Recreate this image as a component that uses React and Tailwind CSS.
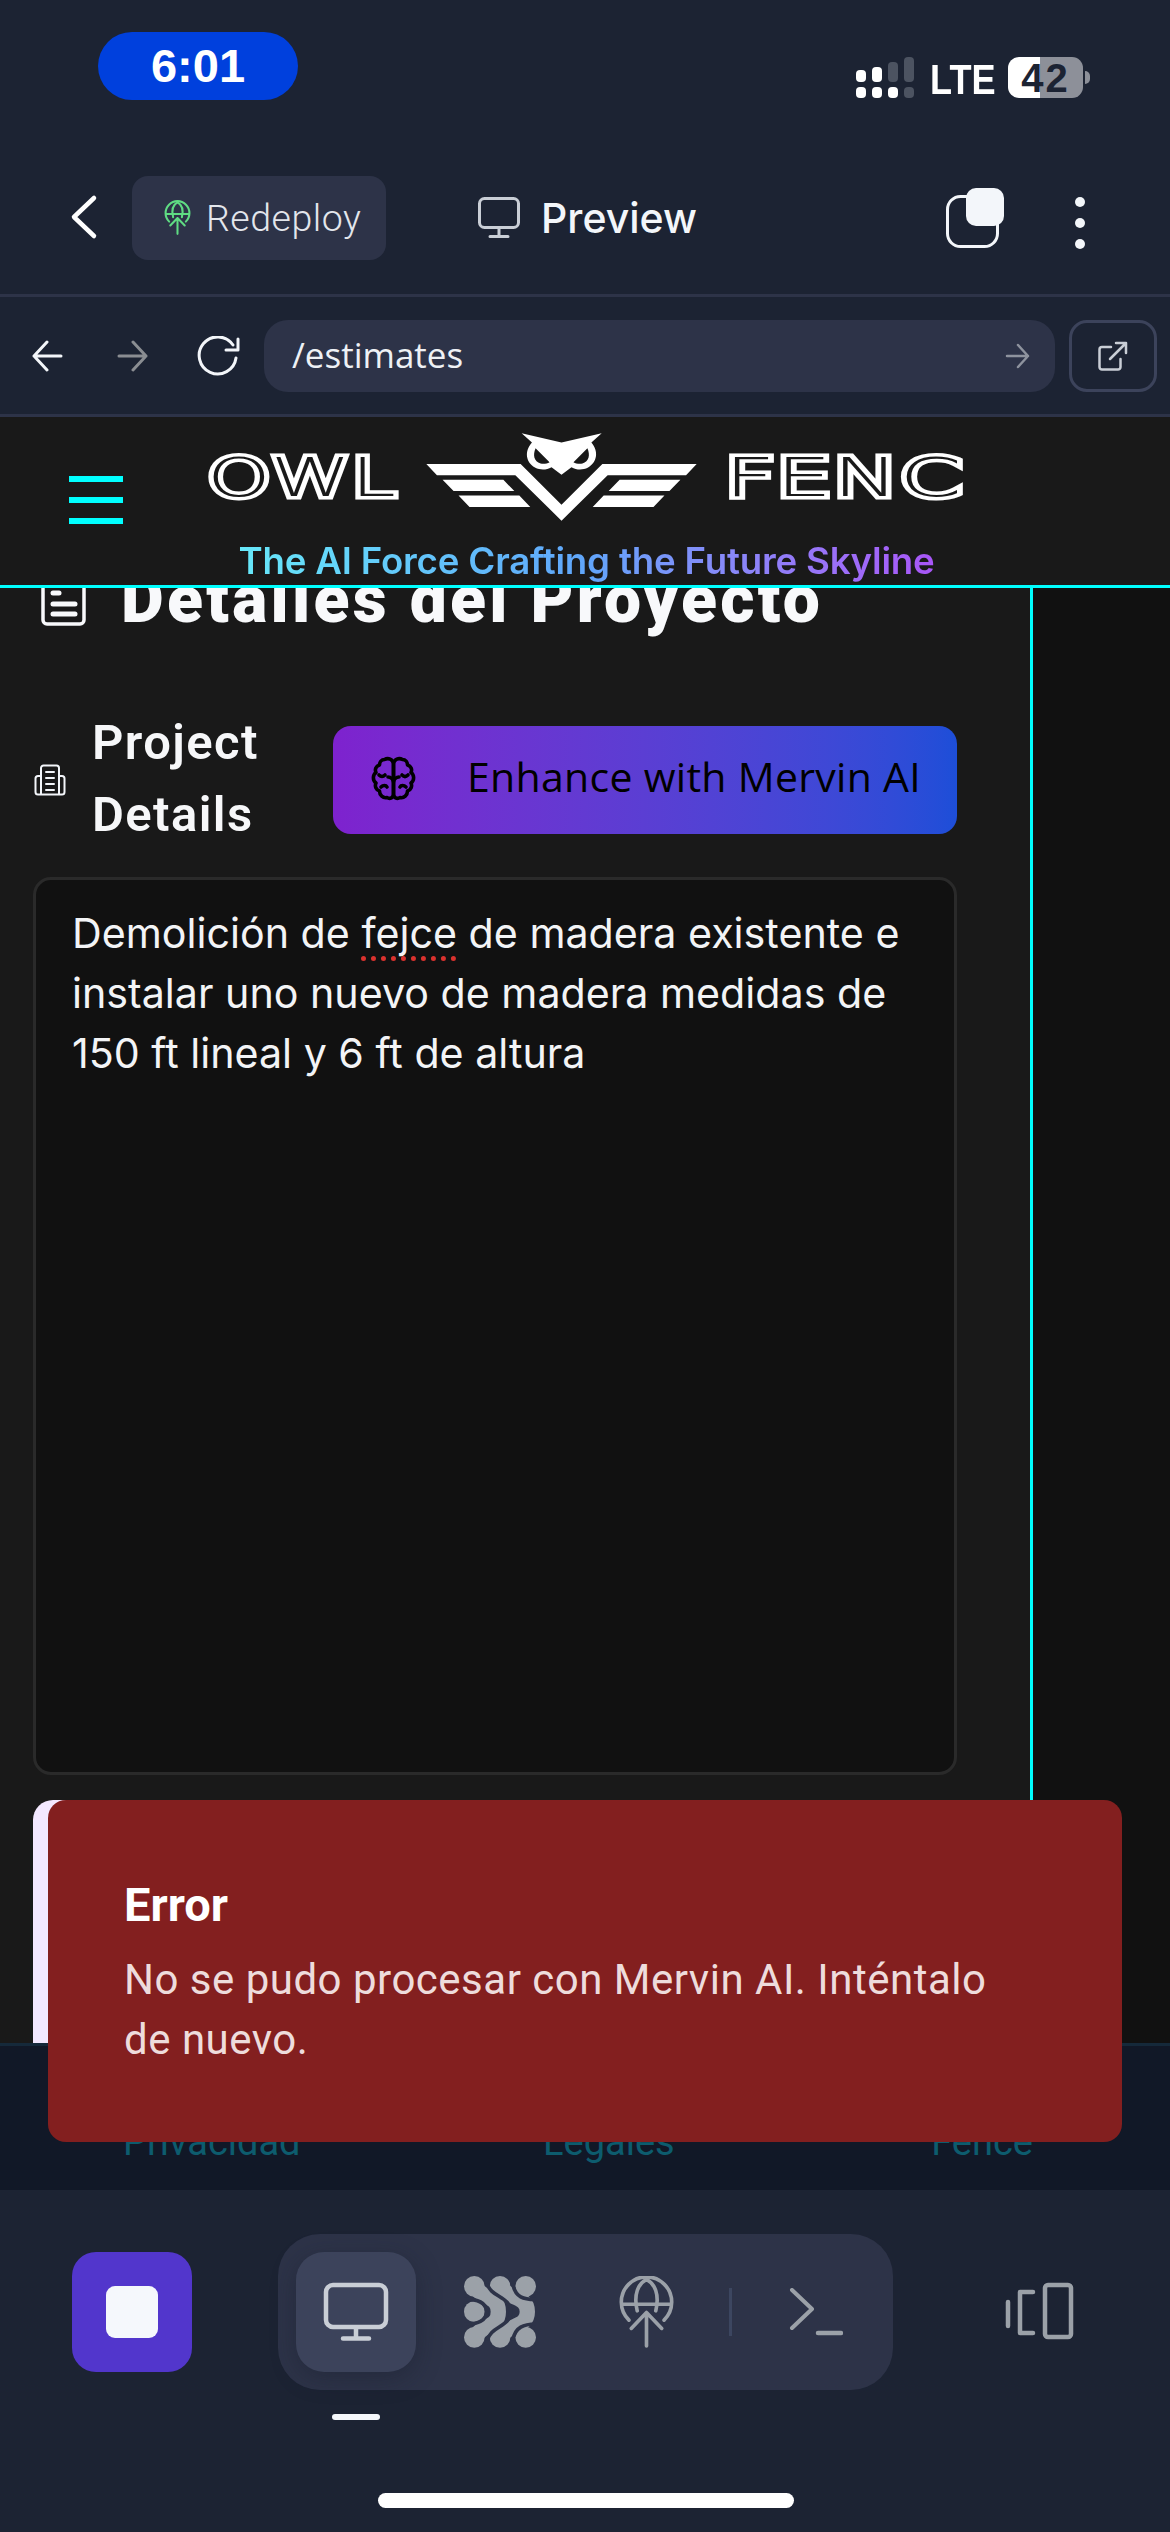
import React from "react";

const Globe = ({ className, stroke, sw = 10 }) => (
  <svg className={className} viewBox="74 105 172 220" fill="none" stroke={stroke} strokeWidth={sw} strokeLinecap="round" strokeLinejoin="round">
    <path d="M107 238 A76 76 0 1 1 213 238" />
    <path d="M132 210 C120 160 135 128 160 115 C185 128 200 160 188 210" />
    <path d="M86 190 H234" />
    <path d="M160 316 V215 M114 263 L160 215 L206 263" />
  </svg>
);

const Logo = ({ children, w, scale }) => (
  <div className={`${w} h-[49px] mt-[36px] shrink-0`}>
    <div className={`${scale} origin-left font-['DejaVu_Sans'] font-extralight text-[54px] leading-[49px] text-[#191919] [-webkit-text-stroke:7px_#ffffff] [paint-order:stroke_fill] whitespace-nowrap`}>
      {children}
    </div>
  </div>
);

export default function App() {
  return (
    <div className="w-[1170px] h-[2532px] overflow-hidden relative flex flex-col bg-[#1c2333] font-['Inter',sans-serif] text-white">
      {/* Status bar */}
      <div className="h-[176px] flex items-start shrink-0">
        <div className="ml-[98px] mt-[32px] w-[200px] h-[68px] rounded-full bg-[#0040dd] flex items-center justify-center font-['Liberation_Sans'] font-bold text-[47px]">6:01</div>
        <svg className="ml-[558px] mt-[57px] w-[58px] h-[41px]" viewBox="0 0 58 41">
          <rect x="0" y="13" width="10" height="12" rx="4" fill="#fff" />
          <rect x="16" y="10" width="10" height="15" rx="4" fill="#fff" />
          <rect x="32" y="5" width="10" height="20" rx="4" fill="#4c5361" />
          <rect x="48" y="0" width="10" height="25" rx="4" fill="#4c5361" />
          <rect x="0" y="30" width="10" height="11" rx="4" fill="#fff" />
          <rect x="16" y="30" width="10" height="11" rx="4" fill="#fff" />
          <rect x="32" y="30" width="10" height="11" rx="4" fill="#fff" />
          <rect x="48" y="30" width="10" height="11" rx="4" fill="#4c5361" />
        </svg>
        <div className="ml-[16px] mt-[59px] w-[63px] h-[41px] flex items-center font-['Liberation_Sans'] font-bold text-[43px] leading-[41px] origin-left scale-x-[0.84] whitespace-nowrap">LTE</div>
        <div className="ml-[15px] mt-[57px] w-[75px] h-[41px] relative rounded-[11px] overflow-hidden bg-[linear-gradient(90deg,#ffffff_0,#ffffff_32px,#8d9099_32px,#8d9099_100%)] flex items-center justify-center font-['Liberation_Sans'] font-bold text-[40px] tracking-[2px] text-[#1c2333]">42</div>
        <div className="mt-[71px] w-[5px] h-[13px] rounded-r-full bg-[#8d9099] ml-[2px]"></div>
      </div>

      {/* Nav row */}
      <div className="h-[118px] flex items-start shrink-0">
        <svg className="ml-[70px] mt-[18px] w-[28px] h-[46px]" viewBox="0 0 28 46" fill="none" stroke="#fff" strokeWidth="4.5" strokeLinecap="round" strokeLinejoin="round">
          <path d="M24 4 L4 23 L24 42" />
        </svg>
        <div className="ml-[34px] w-[254px] h-[84px] rounded-[16px] bg-[#2d3348] flex items-center">
          <Globe className="ml-[32px] w-[27px] h-[36px]" stroke="#5fdc83" sw={13} />
          <span className="ml-[15px] text-[37.5px] text-[#e3e6ec] font-['Roboto'] font-light tracking-[0.5px]">Redeploy</span>
        </div>
        <svg className="ml-[92px] mt-[21px] w-[42px] h-[41px]" viewBox="0 0 42 41" fill="none" stroke="#c9ced6" strokeWidth="3" strokeLinecap="round" strokeLinejoin="round">
          <rect x="1.5" y="1.5" width="39" height="29" rx="5" />
          <path d="M21 31 V39 M12 39.5 H30" />
        </svg>
        <span className="ml-[21px] mt-[14px] w-[152px] shrink-0 whitespace-nowrap text-[41px] leading-[56px] font-medium text-[#f3f6fa]">Preview</span>
        <svg className="ml-[252px] mt-[12px] w-[60px] h-[60px]" viewBox="0 0 60 60">
          <rect x="2.5" y="8.5" width="50" height="50" rx="13" fill="none" stroke="#f3f6fa" strokeWidth="3" />
          <rect x="21" y="0" width="38" height="38" rx="10" fill="#f3f6fa" />
        </svg>
        <div className="ml-[70px] mt-[21px] w-[10px] flex flex-col gap-[11px]">
          <div className="w-[10px] h-[10px] rounded-full bg-[#f3f6fa]"></div>
          <div className="w-[10px] h-[10px] rounded-full bg-[#f3f6fa]"></div>
          <div className="w-[10px] h-[10px] rounded-full bg-[#f3f6fa]"></div>
        </div>
      </div>
      <div className="h-[3px] bg-[#2d3348] shrink-0"></div>

      {/* Browser row */}
      <div className="h-[117px] flex items-center shrink-0">
        <svg className="ml-[32px] w-[31px] h-[32px]" viewBox="0 0 31 32" fill="none" stroke="#f3f6fa" strokeWidth="3" strokeLinecap="round" strokeLinejoin="round">
          <path d="M15 2 L2 16 L15 30 M2 16 H29" />
        </svg>
        <svg className="ml-[54px] w-[31px] h-[32px]" viewBox="0 0 31 32" fill="none" stroke="#8a8d92" strokeWidth="3" strokeLinecap="round" strokeLinejoin="round">
          <path d="M16 2 L29 16 L16 30 M29 16 H2" />
        </svg>
        <svg className="ml-[49px] w-[43px] h-[40px]" viewBox="0 0 43 40" fill="none" stroke="#f3f6fa" strokeWidth="3" strokeLinecap="round" strokeLinejoin="round">
          <path d="M36 9 A18.5 18.5 0 1 0 39 22" />
          <path d="M41 3 V14 H29" />
        </svg>
        <div className="ml-[24px] w-[791px] h-[72px] rounded-[24px] bg-[#2d3348] flex items-center justify-between pl-[28px] pr-[25px]">
          <span className="text-[35px] text-[#eef1f5] font-['Open_Sans']">/estimates</span>
          <svg className="w-[25px] h-[26px]" viewBox="0 0 25 26" fill="none" stroke="#8e939e" strokeWidth="2.5" strokeLinecap="round" strokeLinejoin="round">
            <path d="M13 2 L23 13 L13 24 M23 13 H2" />
          </svg>
        </div>
        <div className="ml-[14px] w-[88px] h-[72px] rounded-[18px] border-[3px] border-[#3c435b] flex items-center justify-center">
          <svg className="w-[30px] h-[30px]" viewBox="0 0 30 30" fill="none" stroke="#c9ced6" strokeWidth="2.5" strokeLinecap="round" strokeLinejoin="round">
            <path d="M13 6 H4 A2.5 2.5 0 0 0 1.5 8.5 V26 A2.5 2.5 0 0 0 4 28.5 H20 A2.5 2.5 0 0 0 22.5 26 V18" />
            <path d="M12 18 L28 2 M18 2 H28 V12" />
          </svg>
        </div>
      </div>
      <div className="h-[3px] bg-[#2d3348] shrink-0"></div>

      {/* App header */}
      <div className="h-[168px] bg-[#191919] flex items-start shrink-0">
        <div className="ml-[69px] mt-[59px] w-[54px] flex flex-col gap-[15px]">
          <div className="h-[6px] bg-[#00ffff]"></div>
          <div className="h-[6px] bg-[#00ffff]"></div>
          <div className="h-[6px] bg-[#00ffff]"></div>
        </div>
        <div className="ml-[84px] w-[759px] flex flex-col items-center">
          <div className="w-full flex items-start h-[106px]">
            <Logo w="w-[193px]" scale="scale-x-[1.5]">OWL</Logo>
            <svg className="ml-[23px] mt-[13px] w-[277px] h-[93px] shrink-0" viewBox="700 30 830 280" fill="#ffffff">
              <path d="M995 40 L1115 68 L1236 40 L1205 68 C1228 95 1222 128 1195 143 C1177 152 1160 150 1145 142 L1115 165 L1085 142 C1070 150 1053 152 1035 143 C1008 128 1002 95 1026 68 Z M1037 85 C1028 105 1032 125 1052 131 C1062 133 1072 131 1079 127 Z M1193 85 L1151 127 C1158 131 1168 133 1178 131 C1198 125 1202 105 1193 85 Z" fillRule="evenodd" />
              <path d="M708 132 L992 132 L1115 255 L1238 132 L1522 132 L1490 166 L1254 166 L1115 303 L976 166 L740 166 Z" />
              <path d="M757 180 L940 180 L973 214 L790 214 Z M805 227 L988 227 L1021 262 L838 262 Z M1473 180 L1290 180 L1257 214 L1440 214 Z M1425 227 L1242 227 L1209 262 L1392 262 Z" />
            </svg>
            <div className="ml-[24px]">
              <Logo w="w-[242px]" scale="scale-x-[1.66]">FENC</Logo>
            </div>
          </div>
          <div className="mt-[16px] h-[44px] leading-[44px] text-[36.7px] font-semibold tracking-[-0.2px] whitespace-nowrap bg-gradient-to-r from-[#67e8f9] via-[#60a5fa] to-[#a855f7] bg-clip-text text-transparent">
            The AI Force Crafting the Future Skyline
          </div>
        </div>
      </div>
      <div className="h-[3px] bg-[#00ffff] shrink-0"></div>

      {/* Main */}
      <div className="flex-1 min-h-0 flex overflow-hidden bg-[#111111]">
        <div className="w-[1033px] shrink-0 bg-[#191919] border-r-[3px] border-[#00ffff] pl-[33px] pr-[73px] flex flex-col">
          <div className="h-[48px] flex items-end pb-[9px] shrink-0">
            <svg className="ml-[8px] w-[45px] h-[60px] shrink-0" viewBox="0 0 45 60" fill="none" stroke="#f8f9fb" strokeWidth="3.5" strokeLinecap="round" strokeLinejoin="round">
              <path d="M12 8 H6 A4 4 0 0 0 2 12 V53 A4 4 0 0 0 6 57 H39 A4 4 0 0 0 43 53 V12 A4 4 0 0 0 39 8 H33" />
              <path d="M12 26 H18" strokeWidth="5" />
              <path d="M12 37 H34 M12 47 H34" strokeWidth="5" />
            </svg>
            <div className="ml-[35px] text-[66px] leading-[64px] font-black whitespace-nowrap font-['Roboto'] text-[#f8f9fb] tracking-[3.3px] translate-y-[5px]">Detalles del Proyecto</div>
          </div>
          <div className="mt-[72px] h-[144px] flex items-center shrink-0">
            <svg className="ml-[1px] w-[32px] h-[32px] shrink-0" viewBox="0 0 32 32" fill="none" stroke="#f3f6fa" strokeWidth="2" strokeLinecap="round" strokeLinejoin="round">
              <path d="M7 30 V4 A2.5 2.5 0 0 1 9.5 1.5 H22.5 A2.5 2.5 0 0 1 25 4 V30" />
              <path d="M7 12 H4 A2.5 2.5 0 0 0 1.5 14.5 V28 A2.5 2.5 0 0 0 4 30.5 H28 A2.5 2.5 0 0 0 30.5 28 V14.5 A2.5 2.5 0 0 0 28 12 H25" />
              <path d="M12 8 H20 M12 14 H20 M12 20 H20 M12 26 H20" />
            </svg>
            <div className="ml-[26px] w-[180px] shrink-0 text-[49px] leading-[72px] font-semibold tracking-[1.4px] text-[#f6f7f9] font-['Roboto'] -translate-y-[1px]">Project Details</div>
            <div className="ml-[61px] w-[624px] shrink-0 h-[108px] rounded-[18px] bg-gradient-to-r from-[#7e22ce] to-[#1d4ed8] flex items-center text-black">
              <svg className="ml-[38px] w-[45px] h-[45px] shrink-0 -translate-y-[2px]" viewBox="0 0 45 45" fill="none" stroke="#000" strokeWidth="3.6" strokeLinecap="round" strokeLinejoin="round">
                <path d="M22.5 8 C22 3 17 1.5 13.5 3.5 C10.5 3.5 8.5 6 8.5 9 C5 10 3.5 13.5 5 16.5 C1.5 19 1.5 24.5 5 27 C3.5 30 5 34 8.5 35 C8.5 39 12 42.5 16 41.5 C19 43.5 22.5 41.5 22.5 38 Z" />
                <path d="M22.5 8 C23 3 28 1.5 31.5 3.5 C34.5 3.5 36.5 6 36.5 9 C40 10 41.5 13.5 40 16.5 C43.5 19 43.5 24.5 40 27 C41.5 30 40 34 36.5 35 C36.5 39 33 42.5 29 41.5 C26 43.5 22.5 41.5 22.5 38 Z" />
                <path d="M17 21 C19.5 21 22.5 23 22.5 26 C22.5 23 25.5 21 28 21 M8 19 C10 21 12 21 14 19 M37 19 C35 21 33 21 31 19 M10 31 C12 29 15 29 16 31 M35 31 C33 29 30 29 29 31" />
              </svg>
              <span className="ml-[51px] text-[41px] tracking-[0.3px] whitespace-nowrap font-['Open_Sans'] -translate-y-[3px]">Enhance with Mervin AI</span>
            </div>
          </div>
          <div className="mt-[25px] h-[898px] shrink-0 rounded-[18px] border-[3px] border-[#2a2a2a] bg-[#111111] pl-[36px] pr-[30px] pt-[23px] text-[41.2px] leading-[60px] text-[#f3f4f6]">
            Demolición de <span className="underline decoration-dotted decoration-[#d9322e] decoration-[5px] underline-offset-[8px] [text-decoration-skip-ink:none]">fejce</span> de madera existente e instalar uno nuevo de madera medidas de 150 ft lineal y 6 ft de altura
          </div>
          <div className="mt-[25px] flex-1 min-h-0 rounded-tl-[20px] bg-[#f3e8ff]"></div>
        </div>
      </div>

      {/* Footer */}
      <div className="h-[147px] shrink-0 bg-[#111827] border-t-[3px] border-[#15293a] flex items-start justify-between pl-[123px] pr-[137px] pt-[70px] text-[38px] leading-[52px] text-[#0d5c6e] font-['Roboto']">
        <span>Privacidad</span>
        <span className="mr-[14px]">Legales</span>
        <span>Fence</span>
      </div>

      {/* Bottom toolbar */}
      <div className="h-[342px] shrink-0 bg-[#1c2333] flex flex-col">
        <div className="mt-[44px] h-[156px] flex items-center">
          <div className="ml-[72px] w-[120px] h-[120px] rounded-[24px] bg-[#5236cc] flex items-center justify-center">
            <div className="w-[52px] h-[52px] rounded-[9px] bg-[#f5f8fc]"></div>
          </div>
          <div className="ml-[86px] w-[615px] h-[156px] rounded-[42px] bg-[#2d3348] flex items-center">
            <div className="ml-[18px] w-[120px] h-[120px] rounded-[28px] bg-[#3c435b] shadow-[0_6px_24px_rgba(20,25,40,0.35)] flex items-center justify-center">
              <svg className="w-[66px] h-[60px]" viewBox="0 0 66 60" fill="none" stroke="#c9ced6" strokeWidth="4.5" strokeLinecap="round" strokeLinejoin="round">
                <rect x="3" y="3" width="60" height="42" rx="7" />
                <path d="M33 46 V56 M20 56.5 H46" />
              </svg>
            </div>
            <svg className="ml-[48px] w-[72px] h-[72px] shrink-0" viewBox="522 108 216 216" fill="#9ba1a8">
              <circle cx="553" cy="215" r="31" />
              <circle cx="707" cy="139" r="31" />
              <circle cx="707" cy="292" r="31" />
              <circle cx="553" cy="139" r="31" />
              <circle cx="553" cy="292" r="31" />
              <circle cx="630" cy="139" r="31" />
              <circle cx="630" cy="292" r="31" />
              <g fill="none" stroke="#9ba1a8" strokeWidth="46" strokeLinecap="round">
                <path d="M553 139 C575 178 625 165 625 215 C625 265 575 252 553 292" />
                <path d="M630 139 C652 178 712 165 712 215 C712 265 652 252 630 292" />
              </g>
              <g fill="none" stroke="#2d3348" strokeWidth="11" strokeLinecap="butt">
                <path d="M592 130 C600 172 662 168 662 215 C662 262 600 258 592 302" />
                <path d="M515 178 C565 175 590 190 590 215 C590 240 565 255 515 252" />
                <path d="M668 130 C675 172 700 180 745 178" />
                <path d="M668 302 C675 260 700 252 745 252" />
              </g>
            </svg>
            <Globe className="ml-[82px] w-[57px] h-[73px] shrink-0" stroke="#9ba1a8" sw={11} />
            <div className="ml-[54px] w-[3px] h-[48px] bg-[#3c4660] shrink-0"></div>
            <svg className="ml-[57px] w-[54px] h-[48px] shrink-0" viewBox="0 0 54 48" fill="none" stroke="#9ba1a8" strokeWidth="4" strokeLinecap="round" strokeLinejoin="round">
              <path d="M3 2 L23 21 L3 40" />
              <path d="M29 45 H52" strokeWidth="4.5" />
            </svg>
          </div>
          <svg className="ml-[112px] w-[69px] h-[60px]" viewBox="0 0 69 60" fill="none" stroke="#9ba1a8" strokeWidth="4.5" strokeLinecap="round" strokeLinejoin="round">
            <path d="M3 20 V44" />
            <path d="M28 10 H15 V51 H28" />
            <rect x="40" y="3" width="26" height="52" rx="3" />
          </svg>
        </div>
        <div className="mt-[24px] ml-[332px] w-[48px] h-[6px] rounded-full bg-[#f5f8fc]"></div>
        <div className="mt-[73px] ml-[378px] w-[416px] h-[15px] rounded-full bg-white"></div>
      </div>

      {/* Error toast */}
      <div className="absolute left-[48px] top-[1800px] w-[1074px] h-[342px] rounded-[18px] bg-[#831f1f] pl-[76px] pr-[100px] pt-[81px] font-['Roboto']">
        <div className="text-[47px] leading-[48px] font-bold text-white">Error</div>
        <div className="mt-[21px] text-[42px] leading-[60px] tracking-[0.5px] text-[#eedcdc]">No se pudo procesar con Mervin AI. Inténtalo de nuevo.</div>
      </div>
    </div>
  );
}
